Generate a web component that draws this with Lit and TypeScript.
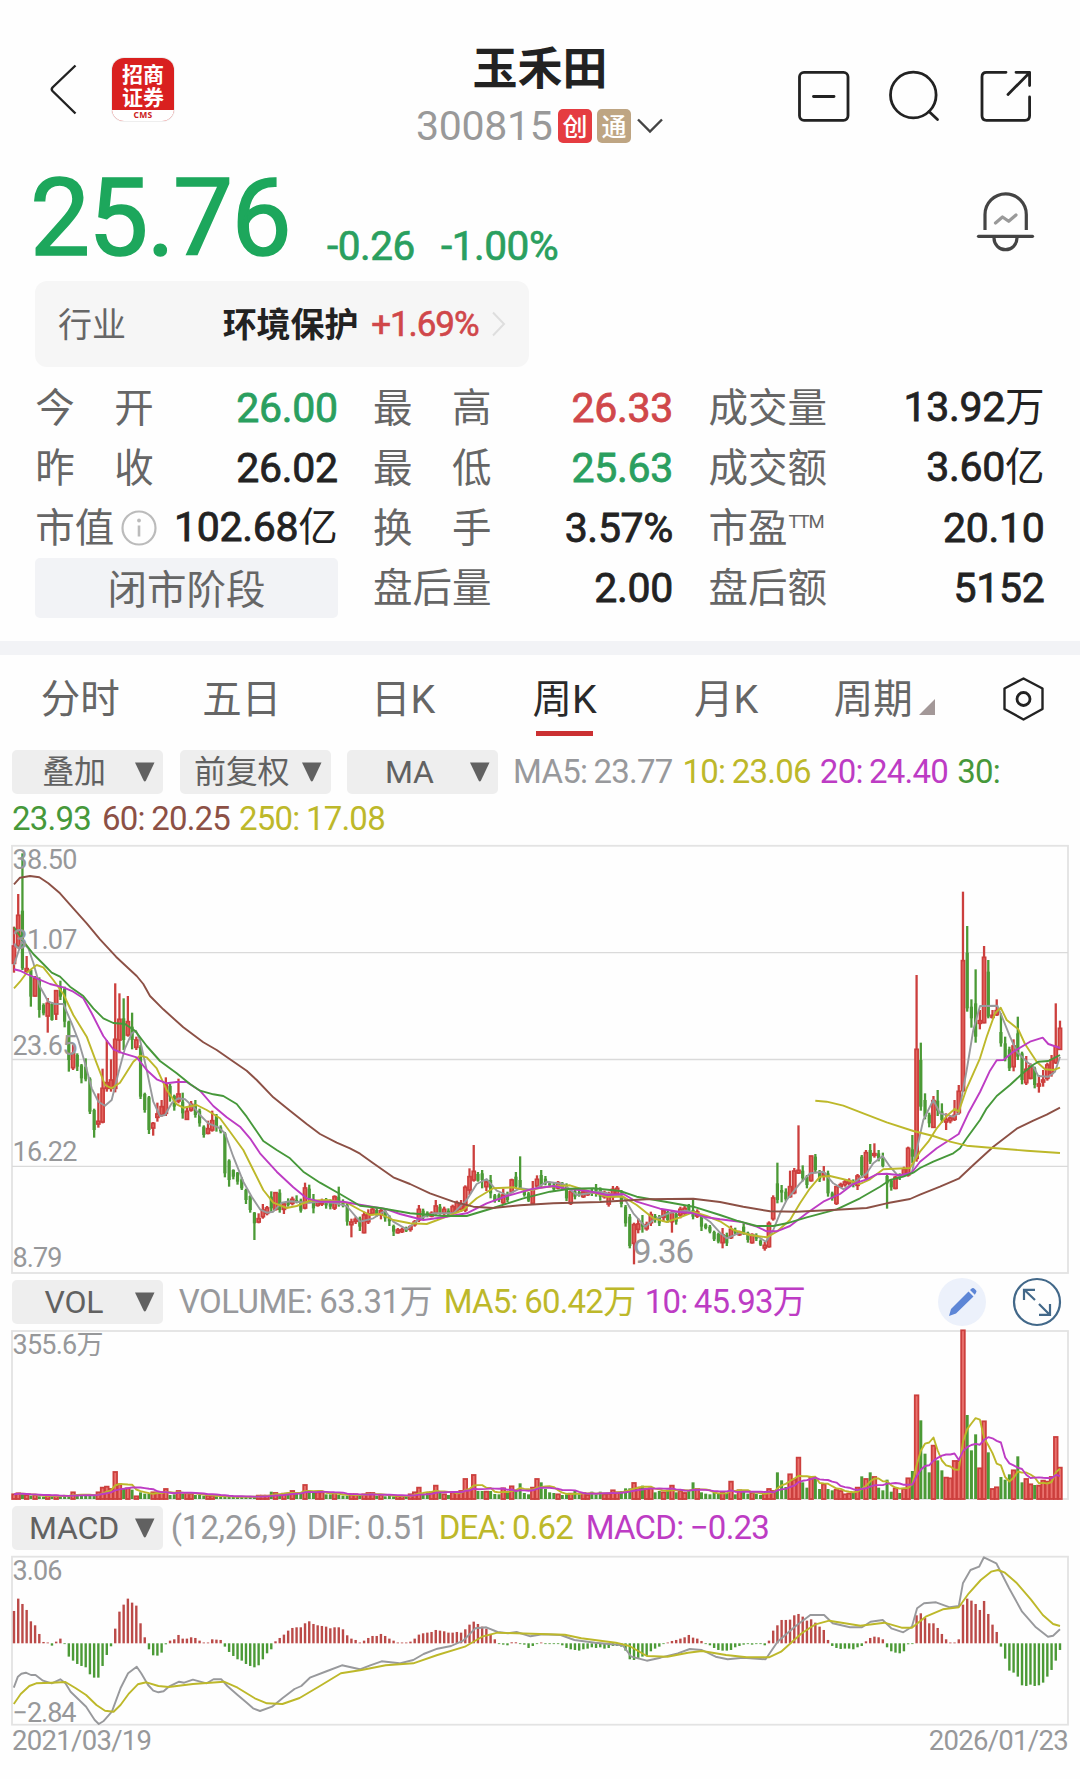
import { LitElement, html, svg, css } from "lit";
import { customElement } from "lit/decorators.js";

// Weekly candles: colour, high, body top, body bottom, low (thirds of a pixel).
const CANDLES = `R 260 318 370 398|R 162 226 318 322|G 40 212 385 390|R 348 386 394 396|G 388 390 470 500|R 408 416 468 470|G 412 420 510 533|G 490 495 520 526|R 474 490 528 578|G 486 492 540 542|R 450 452 522 540|G 422 442 470 480|G 440 446 545 562|G 542 545 660 695|R 615 640 683 690|G 640 645 680 693|G 672 676 715 730|G 655 680 718 724|G 712 716 815 822|G 806 810 870 893|R 760 844 852 863|R 686 745 846 850|R 600 728 745 755|R 658 720 745 755|R 430 598 745 757|R 460 538 600 640|G 475 535 600 630|R 468 545 585 590|G 518 560 600 628|R 590 600 622 630|G 615 620 770 777|G 758 762 810 818|G 768 772 870 882|R 846 850 864 887|R 788 822 832 845|R 780 800 824 830|R 712 735 820 828|G 732 738 770 785|G 764 768 800 812|R 716 762 783 790|G 758 785 820 836|R 800 814 838 840|R 783 793 810 815|G 780 792 825 833|G 806 812 850 860|G 856 860 885 893|R 842 866 880 883|R 812 842 870 875|G 822 828 860 875|G 856 862 874 880|G 876 880 1000 1012|G 958 962 1020 1040|G 988 990 1010 1018|G 996 998 1025 1034|G 1012 1018 1045 1050|G 1046 1050 1080 1092|G 1066 1068 1110 1118|G 1116 1118 1150 1200|R 1120 1136 1146 1150|R 1092 1110 1130 1136|R 1098 1104 1120 1126|G 1054 1070 1105 1118|R 1056 1058 1108 1112|G 1048 1058 1110 1118|R 1086 1092 1108 1122|G 1075 1085 1095 1100|R 1070 1078 1090 1096|G 1066 1080 1085 1090|G 1076 1082 1112 1118|R 1028 1044 1104 1108|G 1034 1046 1075 1090|G 1062 1078 1105 1120|R 1080 1088 1096 1100|R 1076 1084 1092 1098|G 1074 1082 1096 1106|G 1078 1084 1100 1108|R 1066 1070 1104 1110|G 1040 1070 1090 1100|G 1078 1085 1095 1102|G 1088 1096 1145 1157|R 1136 1146 1154 1192|R 1130 1138 1144 1152|G 1130 1135 1160 1173|R 1115 1125 1178 1180|R 1108 1122 1145 1152|R 1100 1108 1120 1126|G 1102 1110 1122 1130|R 1104 1112 1124 1138|G 1108 1114 1135 1145|G 1126 1130 1144 1158|G 1154 1158 1175 1188|R 1164 1170 1178 1181|R 1163 1169 1175 1179|G 1160 1164 1172 1176|R 1156 1160 1168 1175|R 1140 1146 1154 1160|R 1095 1108 1140 1146|G 1106 1112 1132 1140|G 1114 1118 1128 1132|R 1114 1120 1128 1132|R 1080 1098 1118 1124|G 1092 1100 1118 1124|R 1100 1108 1120 1126|G 1105 1112 1124 1128|R 1094 1100 1118 1126|R 1082 1088 1110 1118|R 1080 1092 1108 1116|R 1036 1042 1110 1116|R 985 1010 1050 1065|R 915 994 1020 1025|G 996 1002 1022 1025|G 990 1000 1020 1045|R 1020 1026 1040 1053|G 1005 1020 1060 1075|G 1062 1066 1082 1088|G 1060 1064 1080 1086|R 1046 1065 1088 1095|G 1055 1065 1080 1086|R 1016 1020 1055 1060|G 996 1010 1040 1046|G 949 1020 1045 1050|G 1048 1052 1065 1070|G 1056 1060 1082 1086|R 1023 1050 1090 1095|R 1006 1018 1038 1046|G 990 1005 1035 1042|G 1008 1016 1030 1036|G 1025 1030 1036 1040|G 1028 1034 1048 1054|R 1023 1028 1044 1048|G 1026 1032 1042 1048|G 1030 1040 1075 1083|R 1045 1055 1090 1095|G 1045 1054 1070 1078|G 1050 1056 1065 1070|R 1048 1056 1070 1074|R 1050 1056 1064 1068|G 1045 1052 1062 1068|G 1032 1044 1060 1070|G 1042 1050 1070 1082|R 1052 1058 1070 1076|R 1055 1062 1092 1100|R 1038 1048 1070 1080|R 1038 1045 1062 1070|G 1050 1070 1092 1102|G 1095 1100 1150 1160|G 1122 1130 1218 1225|R 1148 1154 1210 1273|R 1135 1152 1168 1180|G 1125 1150 1160 1178|R 1145 1154 1166 1172|R 1115 1124 1148 1158|G 1122 1128 1140 1148|G 1125 1130 1150 1158|R 1108 1112 1132 1146|G 1110 1116 1140 1148|R 1110 1118 1145 1178|G 1115 1122 1145 1154|R 1100 1108 1125 1135|R 1096 1105 1120 1126|G 1092 1098 1116 1122|G 1078 1110 1130 1138|R 1108 1116 1128 1134|G 1122 1128 1160 1173|G 1150 1154 1164 1168|G 1155 1160 1175 1180|G 1172 1176 1198 1203|G 1178 1182 1205 1210|R 1164 1185 1208 1225|G 1178 1185 1210 1218|R 1157 1168 1193 1197|G 1163 1170 1178 1183|R 1172 1176 1184 1188|G 1150 1160 1178 1185|G 1175 1178 1200 1208|R 1180 1184 1208 1211|G 1180 1186 1196 1203|G 1198 1202 1214 1218|R 1205 1216 1224 1232|R 1144 1150 1220 1223|R 1066 1074 1136 1142|G 968 1030 1080 1090|G 1035 1050 1058 1087|G 1045 1055 1078 1084|R 992 1040 1070 1073|R 984 993 1058 1063|R 856 991 999 1002|G 976 992 1015 1024|G 1005 1010 1035 1045|R 948 948 1022 1025|G 942 950 990 1000|G 990 995 1018 1026|R 978 1000 1006 1022|G 992 1000 1060 1070|G 1055 1060 1075 1082|R 1038 1040 1090 1095|R 1028 1034 1040 1044|R 1020 1026 1034 1040|R 1015 1022 1030 1036|G 1018 1024 1034 1042|R 1002 1008 1036 1050|G 945 950 1005 1014|R 930 938 1012 1018|G 912 930 965 972|R 910 941 946 953|G 930 940 955 964|G 938 955 978 982|G 1000 1008 1030 1106|G 1020 1022 1042 1052|R 1008 1012 1045 1048|G 1000 1004 1014 1020|R 980 988 1005 1010|R 920 925 1005 1010|G 885 928 950 970|R 405 628 955 965|G 608 660 800 812|G 760 780 830 838|G 818 824 850 862|R 768 782 862 864|G 750 782 812 828|G 790 814 840 848|R 820 838 846 870|R 826 834 842 850|R 780 826 838 843|R 735 754 818 824|R 155 362 752 755|G 258 338 505 515|G 478 500 535 563|G 388 490 590 608|R 510 542 550 568|R 318 352 548 550|G 360 395 530 535|R 510 526 532 536|R 478 512 524 528|G 520 576 610 620|G 590 610 655 664|G 620 628 685 693|R 598 618 680 694|G 530 580 650 660|G 635 640 720 733|R 648 688 728 735|R 670 678 715 718|G 680 685 735 745|R 705 732 738 758|R 690 720 726 740|R 668 675 715 722|R 645 660 700 710|R 490 620 668 672|R 542 565 628 630`
  .split("|")
  .map((row) => {
    const [c, ...v] = row.split(" ");
    const [hi, top, bot, lo] = v.map(Number);
    return { up: c === "R", hi, top, bot, lo };
  });

const nums = (s: string) => s.trim().split(/[\s,]+/).map(Number);

const VOLUME = nums(`14,17,17,12,10,12,8,7,11,7,10,8,12,8,20,14,12,10,10,10,20,34,37,30,81,44,30,32,28,8,20,16,16,20,18,20,30,12,14,24,16,18,16,12,12,10,10,10,8,7,7,7,7,7,7,7,7,7,10,10,10,22,18,14,16,20,24,16,18,42,22,18,20,20,14,14,18,12,10,10,14,14,12,14,18,18,10,12,8,9,8,9,9,8,14,20,34,14,18,20,40,20,14,12,20,18,24,60,28,72,24,24,22,24,15,14,32,20,38,28,47,18,14,34,60,50,30,20,18,14,12,14,16,24,14,18,12,22,14,22,14,16,26,20,24,32,32,48,34,40,30,32,20,24,20,28,40,20,24,18,26,50,30,20,16,14,18,16,20,18,52,14,26,24,16,18,16,12,14,30,24,80,56,36,74,58,124,50,34,64,62,30,44,30,26,28,24,14,16,20,34,68,60,80,66,34,26,58,22,32,18,30,62,84,311,236,136,80,160,116,86,64,62,114,114,506,252,146,194,92,233,140,30,35,66,58,74,86,128,50,60,44,42,40,55,52,66,186,94`);

const MACD = nums(`97,134,118,100,66,54,28,4,2,-7,5,14,0,-40,-52,-62,-68,-72,-93,-103,-103,-68,-35,-9,44,95,116,134,122,113,60,18,-18,-36,-37,-28,-3,8,12,25,14,14,18,16,8,1,1,12,11,10,-10,-26,-38,-48,-52,-62,-68,-72,-66,-48,-30,-18,6,16,26,38,46,48,48,60,66,58,54,52,50,45,48,48,42,24,14,10,2,8,16,22,22,28,22,14,8,2,2,2,5,14,26,30,32,34,40,38,36,32,32,34,32,42,56,65,58,50,44,28,12,-2,-4,-6,3,3,-2,-4,-14,-8,-2,2,0,-1,-2,-2,-6,-14,-18,-20,-22,-18,-16,-12,-14,-12,-16,-14,-8,-8,-10,-22,-48,-50,-44,-40,-38,-24,-16,-10,0,2,7,10,14,18,25,17,14,7,-1,-6,-14,-20,-22,-22,-20,-12,-8,-4,-1,-4,-2,-2,-6,8,38,54,70,70,71,84,88,80,68,72,62,50,40,10,-8,-14,-17,-16,-16,-18,-12,-8,6,16,20,18,12,-12,-24,-28,-30,-24,-3,0,84,90,76,60,60,46,28,12,2,2,12,116,134,128,118,100,127,88,56,34,-10,-46,-82,-88,-100,-126,-128,-124,-128,-126,-118,-100,-80,-52,-20`);

const MA60 = `42,133 60,113 90,108 118,112 145,130 180,160 220,205 260,250 300,298 348,350 380,380 410,408 430,432 450,468 490,508 550,562 610,607 650,630 690,658 740,692 770,720 820,772 870,812 920,852 960,882 1010,908 1050,925 1080,941 1120,970 1180,1012 1230,1032 1290,1060 1360,1085 1420,1100 1480,1104 1560,1096 1660,1090 1800,1086 1940,1078 2080,1076 2160,1086 2230,1100 2310,1114 2390,1115 2510,1109 2600,1104 2660,1090 2730,1077 2760,1064 2820,1040 2876,1016 2920,975 2980,920 3050,866 3100,842 3140,824 3180,803`;
const MA30 = `42,262 75,310 100,342 130,372 155,398 180,410 210,440 250,468 280,505 310,535 340,549 375,552 405,572 440,618 480,663 530,700 570,732 600,752 640,763 670,768 710,792 740,830 790,903 830,930 870,955 910,995 960,1028 1020,1062 1080,1097 1140,1104 1230,1120 1330,1128 1400,1128 1480,1104 1570,1075 1650,1055 1710,1046 1780,1045 1860,1053 1910,1070 2000,1086 2080,1100 2160,1125 2210,1142 2270,1158 2320,1158 2360,1150 2420,1132 2510,1108 2580,1075 2640,1040 2670,1020 2710,1010 2740,998 2760,984 2800,965 2860,940 2880,925 2900,895 2940,840 2960,805 2990,768 3030,735 3070,698 3100,674 3115,665 3145,663 3180,645`;
const MA20 = `42,388 60,392 80,402 110,415 150,432 190,442 220,455 250,475 275,520 310,588 340,628 370,640 410,652 440,690 470,718 500,730 530,726 560,726 600,752 640,798 680,832 720,860 750,895 780,940 830,995 880,1042 920,1075 960,1085 1030,1085 1080,1094 1160,1108 1200,1122 1270,1140 1330,1132 1400,1120 1460,1090 1520,1068 1600,1046 1660,1038 1700,1046 1760,1052 1820,1065 1870,1062 1910,1085 1980,1106 2040,1116 2080,1120 2120,1132 2160,1138 2220,1145 2270,1160 2300,1174 2330,1174 2370,1158 2420,1120 2470,1085 2520,1062 2560,1032 2600,1018 2630,1003 2660,1001 2700,1006 2735,998 2760,965 2810,925 2876,882 2905,820 2940,756 2970,692 2990,661 3010,660 3040,635 3090,605 3128,593 3145,612 3180,624`;
const MA10 = `42,445 60,425 80,398 110,375 130,382 160,420 190,462 220,525 260,590 290,670 315,735 335,745 360,728 400,665 420,647 440,652 470,685 500,750 530,793 550,803 590,795 620,810 660,835 690,875 730,930 760,990 790,1050 820,1088 860,1104 890,1098 930,1082 980,1080 1040,1088 1080,1110 1110,1125 1140,1122 1180,1140 1230,1150 1280,1152 1340,1130 1390,1110 1430,1075 1480,1045 1540,1042 1580,1052 1630,1042 1710,1036 1770,1055 1820,1070 1870,1070 1910,1095 1960,1135 2000,1146 2040,1132 2080,1116 2120,1128 2160,1144 2200,1170 2250,1185 2300,1192 2330,1175 2370,1140 2400,1090 2430,1045 2460,1010 2490,1008 2540,1020 2580,1032 2610,1018 2650,988 2730,984 2745,960 2760,935 2785,905 2810,865 2840,828 2865,806 2876,815 2900,745 2940,655 2960,590 2985,520 3002,503 3020,540 3055,568 3075,612 3110,665 3135,688 3160,690 3180,683`;
const MA5 = `42,375 65,305 85,325 100,368 120,440 145,485 165,492 190,492 215,550 235,600 255,670 275,745 295,785 315,797 335,780 355,700 375,625 395,580 408,572 420,600 440,690 460,785 480,828 495,825 515,790 535,775 555,778 580,800 600,825 625,850 655,862 675,880 700,950 730,1025 755,1070 780,1108 800,1118 820,1115 845,1088 870,1084 920,1088 960,1085 1000,1088 1040,1098 1080,1145 1120,1135 1155,1112 1180,1145 1220,1168 1260,1135 1300,1120 1360,1120 1400,1080 1430,1032 1460,1017 1490,1052 1520,1065 1560,1045 1600,1050 1640,1025 1690,1032 1730,1065 1800,1055 1840,1065 1870,1070 1900,1120 1935,1160 1960,1140 2010,1118 2060,1112 2100,1125 2130,1145 2160,1178 2180,1195 2220,1178 2270,1188 2298,1205 2320,1170 2340,1120 2360,1080 2400,1030 2430,1000 2470,995 2500,1030 2530,1048 2560,1030 2600,1000 2620,970 2648,948 2670,980 2695,1008 2735,1000 2750,930 2770,840 2800,780 2820,820 2860,830 2876,820 2900,690 2920,570 2940,498 2992,497 3010,540 3030,590 3050,635 3080,665 3100,680 3115,708 3145,710 3165,695 3180,650`;
const MA250 = `2446,782 2480,785 2530,797 2590,820 2660,847 2740,873 2800,888 2850,905 2900,917 2980,924 3080,932 3180,939`;

const DIF = `40,1253 52,1220 62,1211 75,1208 90,1215 103,1215 125,1232 150,1240 175,1228 190,1240 205,1265 250,1310 275,1350 287,1362 300,1354 325,1325 350,1255 372,1210 397,1190 410,1210 430,1245 445,1262 460,1267 475,1264 490,1250 520,1235 535,1238 560,1229 600,1240 620,1228 643,1228 660,1248 690,1275 715,1297 735,1315 755,1323 790,1310 820,1285 855,1257 875,1248 900,1223 950,1203 993,1186 1045,1198 1075,1186 1108,1174 1160,1180 1200,1170 1230,1152 1270,1136 1310,1128 1345,1112 1380,1075 1412,1072 1445,1086 1475,1090 1500,1086 1540,1099 1575,1093 1628,1095 1668,1110 1728,1118 1808,1126 1833,1160 1878,1172 1918,1163 1968,1150 2003,1137 2038,1140 2078,1160 2113,1168 2158,1163 2223,1168 2258,1115 2308,1070 2353,1035 2393,1035 2418,1060 2468,1072 2503,1072 2528,1055 2563,1050 2588,1075 2623,1087 2648,1070 2663,1015 2683,1000 2718,997 2758,1012 2784,1008 2796,940 2818,900 2843,890 2857,862 2893,880 2930,955 2968,1025 3008,1072 3043,1100 3058,1097 3078,1078`;
const DEA = `40,1302 60,1272 85,1248 105,1240 150,1238 190,1236 220,1255 250,1275 280,1305 305,1322 330,1325 350,1305 375,1270 400,1243 425,1237 460,1248 490,1251 560,1242 650,1235 690,1253 740,1285 775,1300 820,1302 870,1284 930,1247 990,1210 1050,1200 1120,1186 1200,1180 1270,1155 1350,1130 1400,1100 1445,1088 1568,1092 1640,1094 1688,1105 1788,1118 1828,1128 1878,1158 1938,1160 1998,1148 2038,1143 2108,1155 2168,1162 2233,1162 2268,1145 2328,1090 2368,1063 2408,1052 2498,1067 2568,1058 2618,1073 2648,1073 2688,1040 2738,1018 2784,1012 2813,970 2848,930 2878,905 2898,900 2918,908 2953,940 2993,988 3028,1035 3058,1062 3078,1068`;

const RED = "#cc3f3d";
const GREEN = "#4b9a36";
const C = { grey: "#98999c", yellow: "#bdb82a", magenta: "#bd3cc4", green: "#46983a", brown: "#8c5045" };

const cx = (i: number) => 14 + 4.2177 * i;
const scalePts = (s: string, kx: number, ky: number, dy = 0) => {
  const v = nums(s);
  let out = "";
  for (let i = 0; i < v.length; i += 2) out += `${(v[i] / kx).toFixed(1)},${(v[i + 1] / ky + dy).toFixed(1)} `;
  return out;
};
const average = (n: number) =>
  VOLUME.map((_, i) => {
    const part = VOLUME.slice(Math.max(0, i - n + 1), i + 1);
    return part.reduce((a, b) => a + b, 0) / part.length;
  });
const line = (points: string, stroke: string, w = 1.9) =>
  svg`<polyline points=${points} fill="none" stroke=${stroke} stroke-width=${w} stroke-linejoin="round"></polyline>`;
const label = (x: number, y: number, len: number, text: string, size = 27) =>
  svg`<text x=${x} y=${y} font-size=${size} textLength=${len} fill="#97989a">${text}</text>`;

@customElement("price-chart")
class PriceChart extends LitElement {
  static styles = css`
    :host { display: block; height: 440px; }
    svg { display: block; font-family: Roboto, "Noto Sans CJK SC", sans-serif; }
  `;
  render() {
    return html`<svg width="1080" height="440" viewBox="0 0 1080 440">
      <rect x="12" y="5.8" width="1056" height="427.2" fill="none" stroke="#e3e3e3" stroke-width="1.8"></rect>
      ${[112.7, 219.5, 326.3].map((y) => svg`<line x1="12" x2="1068" y1=${y} y2=${y} stroke="#dadada" stroke-width="1.3"></line>`)}
      ${CANDLES.map((k, i) => {
        const x = cx(i);
        const c = k.up ? RED : GREEN;
        const h = Math.max(1.2, (k.bot - k.top) / 3);
        return svg`<line x1=${x} x2=${x} y1=${k.hi / 3} y2=${k.lo / 3} stroke=${c} stroke-width="2.3"></line>
          ${k.up
            ? svg`<rect x=${x - 1.55} y=${k.top / 3} width="3.1" height=${h} fill="#e4645f" stroke=${c} stroke-width="1.7"></rect>`
            : svg`<rect x=${x - 1.6} y=${k.top / 3} width="3.2" height=${h} fill=${c}></rect>`}`;
      })}
      ${line(scalePts(MA5, 3, 3), C.grey)} ${line(scalePts(MA10, 3, 3), C.yellow)}
      ${line(scalePts(MA20, 3, 3), C.magenta)} ${line(scalePts(MA30, 3, 3), C.green)}
      ${line(scalePts(MA60, 3, 3), C.brown)} ${line(scalePts(MA250, 3, 3), C.yellow)}
      ${label(12.5, 29, 65, "38.50")} ${label(12.5, 109, 65, "31.07")} ${label(12.5, 215, 65, "23.65")}
      ${label(12.5, 321, 65, "16.22")} ${label(12.5, 427, 50, "8.79")} ${label(633, 423, 61, "9.36", 33)}
    </svg>`;
  }
}

@customElement("volume-chart")
class VolumeChart extends LitElement {
  static styles = PriceChart.styles;
  render() {
    const avg = (n: number) => average(n).map((v, i) => `${cx(i).toFixed(1)},${(175 - v / 3).toFixed(1)}`).join(" ");
    return html`<svg width="1080" height="182" viewBox="0 0 1080 182">
      <rect x="12" y="7" width="1056" height="168" fill="none" stroke="#e3e3e3" stroke-width="1.8"></rect>
      ${label(12.5, 30, 91, "355.6万")}
      ${VOLUME.map((v, i) => {
        const x = cx(i);
        const h = v / 3;
        return CANDLES[i].up
          ? svg`<rect x=${x - 1.8} y=${175 - h} width="3.6" height=${h} fill="#ea736f" stroke=${RED} stroke-width="1.8"></rect>`
          : svg`<rect x=${x - 1.5} y=${175 - h} width="3" height=${h} fill=${GREEN}></rect>`;
      })}
      ${line(avg(5), C.yellow)} ${line(avg(10), C.magenta)}
    </svg>`;
  }
}

@customElement("macd-chart")
class MacdChart extends LitElement {
  static styles = PriceChart.styles;
  render() {
    return html`<svg width="1080" height="180" viewBox="0 0 1080 180">
      <rect x="12" y="6.7" width="1056" height="168" fill="none" stroke="#e3e3e3" stroke-width="1.8"></rect>
      ${MACD.map((v, i) => {
        const h = Math.max(0.8, Math.abs(v) / 3);
        return svg`<rect x=${cx(i) - 1.2} y=${v > 0 ? 93.3 - h : 93.3} width="2.4" height=${h} fill=${v > 0 ? "#bb4a48" : GREEN}></rect>`;
      })}
      ${line(scalePts(DIF, 2.9037, 3, -280), C.grey)} ${line(scalePts(DEA, 2.9037, 3, -280), C.yellow)}
      ${label(12.5, 30, 50, "3.06")} ${label(12.5, 172, 64, "−2.84")}
    </svg>`;
  }
}

const stat = (name: unknown, value: string, tone = "") =>
  html`<div class="stat"><span class="name">${name}</span><span class="value ${tone}">${value}</span></div>`;
const pair = (a: string, b: string) => html`<span class="pair"><span>${a}</span><span>${b}</span></span>`;
const unit = (n: string, u: string) => html`<span class="value">${n}<span class="unit">${u}</span></span>`;
const picker = (text: string) =>
  html`<div class="picker"><span class="ptext">${text}</span><svg width="20" height="20" viewBox="0 0 20 20"><path d="M0 0.5H19.5L11 18.5Q9.8 20.5 8.6 18.5Z" fill="#616161"></path></svg></div>`;

@customElement("app-root")
class AppRoot extends LitElement {
  static styles = css`
    :host { display: block; width: 1080px; min-height: 1779px; background: #fefefe; color: #222;
      font-family: Roboto, "Noto Sans CJK SC", sans-serif; overflow: hidden; }
    svg { display: block; flex: none; overflow: visible; fill: none; }
    .header { display: grid; grid-template-columns: 415px 250px 1fr; height: 150px; }
    .left { display: flex; gap: 34px; padding: 58px 0 0 48px; }
    .back { margin-top: 4px; }
    .logo { width: 62px; height: 63px; border-radius: 12px; background: #d9201f; overflow: hidden; color: #fff;
      display: flex; flex-direction: column; box-shadow: 0 0 0 1px #eee; }
    .logotext { flex: 1; text-align: center; font: 700 21px/22.5px "Noto Sans CJK SC", sans-serif; padding-top: 4px; }
    .cms { height: 11px; background: #fff; color: #c22; font: 700 8.5px/10px "Open Sans", sans-serif; text-align: center; letter-spacing: .3px; }
    .center { padding-top: 40px; display: flex; flex-direction: column; gap: 14px; }
    .title { font: 700 45px/52px "Noto Sans CJK SC", sans-serif; text-align: center; }
    .code { display: flex; align-items: center; height: 40px; color: #999; font-size: 41px; }
    .code .num { letter-spacing: -.3px; width: 142px; padding-left: 1px; }
    .badge { width: 34px; height: 34px; border-radius: 5px; background: #e53c41; color: #fff;
      font: 500 25px/33px "Noto Sans CJK SC", sans-serif; text-align: center; margin-right: 5px; }
    .tan { background: #bea583; }
    .icons { display: flex; gap: 34px; padding: 68px 0 0 131px; }
    .quote { display: flex; align-items: flex-start; margin-top: 3px; height: 128px; padding: 0 44px 0 30px; color: #1da75c; }
    .price { font-size: 107px; line-height: 130px; letter-spacing: -1.8px; width: 297px; margin-top: 1px; -webkit-text-stroke: 1.6px #1da75c; }
    .chg { font-size: 40.5px; line-height: 40px; letter-spacing: -.45px; color: #2a9f5f; width: 114px; margin-top: 73px; -webkit-text-stroke: .7px #2a9f5f; }
    .bell { margin: 37px 0 0 auto; }
    .industry { display: flex; align-items: center; margin-left: 35px; width: 494px; height: 85.5px; border-radius: 12px;
      background: #f6f6f6; box-sizing: border-box; padding: 0 23px; }
    .ilabel { font-size: 34px; color: #666; width: 165px; }
    .iname { font-size: 34px; font-weight: 700; width: 149px; }
    .ilabel, .iname { position: relative; top: -1px; }
    .ipct { font-size: 35px; color: #d0474a; letter-spacing: -1.1px; width: 121px; white-space: nowrap; padding-top: 2px; -webkit-text-stroke: .6px #d0474a; }
    .stats { position: relative; display: grid; grid-template-columns: 302.5px 300px 336px; grid-auto-rows: 60px;
      column-gap: 35.3px; margin: 11px 0 0 35.3px; }
    .stat { display: flex; align-items: center; justify-content: space-between; line-height: 60px; white-space: nowrap; }
    .name { color: #666; font-size: 39.5px; display: flex; align-items: center; padding-top: 2px; }
    .pair { display: flex; justify-content: space-between; width: 118.5px; }
    .value { font-size: 41px; letter-spacing: -.3px; -webkit-text-stroke: .8px currentColor; }
    .unit { font-size: 39.5px; letter-spacing: 0; -webkit-text-stroke: 0; }
    .up { color: #d0474a; } .down { color: #2a9f5f; }
    .info { margin: -2px 0 0 7px; }
    .ttm { font-size: 18.5px; line-height: 20px; align-self: flex-start; margin: 13px 0 0 1px; letter-spacing: -1px; }
    .phase { background: #f2f3f6; border-radius: 5px; color: #666; font-size: 39.5px; text-align: center; line-height: 65px; height: 60px; }
    .corner { position: absolute; right: -23.5px; bottom: 0; left: auto; }
    .band { height: 14px; margin-top: 23.5px; background: #f2f3f6; }
    .tabs { display: flex; height: 95px; line-height: 90px; font-size: 39.5px; color: #666; }
    .tab { width: 161.5px; text-align: center; position: relative; white-space: nowrap; left: -.5px; }
    .active { color: #2a2a2a; }
    .active::after { content: ""; position: absolute; left: 52px; top: 76px; width: 57px; height: 5px; background: #cb3032; }
    .tab.period { display: flex; justify-content: center; align-items: flex-start; gap: 6px; left: -4px; }
    .period svg { margin-top: 44px; }
    .hex { margin: 21px 0 0 33px; }
    .tools { display: flex; align-items: center; height: 44px; padding-left: 12px; white-space: nowrap; }
    .picker { width: 151px; height: 44px; border-radius: 5px; background: #eeeeee; display: flex; align-items: center;
      margin-right: 16.7px; flex: none; box-sizing: border-box; padding-right: 8.5px; }
    .ptext { flex: 1; text-align: center; font-size: 32px; color: #616161; letter-spacing: -.2px; line-height: 48px; padding-left: 1.5px; }
    .legend { font-size: 33px; letter-spacing: -.78px; line-height: 48px; color: #98999c; word-spacing: -1px; }
    .y { color: #bdb82a; } .m { color: #bd3cc4; } .g { color: #46983a; } .b { color: #8c5045; }
    .w514 { width: 169.5px; margin-left: -2px; } .w137 { width: 137.3px; }
    .second { display: flex; height: 46px; padding-left: 12px; }
    .second .legend { line-height: 50px; }
    volume-chart { height: 182px; } macd-chart { height: 180px; }
    .dates { display: flex; justify-content: space-between; padding: 0 12px; font-size: 27.5px; line-height: 21px; color: #97989a; letter-spacing: -.7px; }
  `;
  render() {
    return html`
      <div class="header">
        <div class="left">
          <svg class="back" width="30" height="56" viewBox="48 62 30 56"><path d="M75.500 65.500L52.500 87.500Q51 89.300 52.500 91L75.500 113.500" stroke="#222" stroke-width="2.4"></path></svg>
          <div class="logo"><div class="logotext">招商<br />证券</div><div class="cms">CMS</div></div>
        </div>
        <div class="center">
          <div class="title">玉禾田</div>
          <div class="code"><span class="num">300815</span><span class="badge">创</span><span class="badge tan">通</span>
            <svg width="28" height="16" viewBox="636 117 28 16"><path d="M638 118.5L650 130.5L662 118.5" stroke="#444" stroke-width="2.4"></path></svg></div>
        </div>
        <div class="icons">
          <svg width="56" height="56" viewBox="796 68 56 56" stroke="#222" stroke-width="2.8" stroke-linecap="round"><rect x="799.5" y="72.3" width="48.5" height="48" rx="4.5"></rect><path d="M813.5 96.5H834"></path></svg>
          <svg width="56" height="56" viewBox="886 68 56 56" stroke="#222" stroke-width="2.8" stroke-linecap="round"><circle cx="913.3" cy="95" r="22.8"></circle><path d="M929 111.5L937.5 119.5"></path></svg>
          <svg width="56" height="56" viewBox="976 68 56 56" stroke="#222" stroke-width="2.8" stroke-linecap="round" stroke-linejoin="round"><path d="M1006 72.3H986.5Q982 72.3 982 76.8V115.8Q982 120.3 986.5 120.3H1025Q1029.6 120.3 1029.6 115.8V97"></path><path d="M1016 72.3H1029.6V85.5M1029 73.2L1008 94.5"></path></svg>
        </div>
      </div>
      <div class="quote">
        <span class="price">25.76</span><span class="chg">-0.26</span><span class="chg">-1.00%</span>
        <svg class="bell" width="62" height="64" viewBox="974 190 62 64" stroke="#444" stroke-width="3.2" stroke-linecap="round"><path d="M985 230V214.5A20.5 20.5 0 0 1 1026.300 214.500V230" stroke-linecap="butt"></path><path d="M978.500 236.300H1032.500"></path><path d="M994 238A11.5 11.700 0 0 0 1017 238"></path><path d="M995.500 223L1002.500 217L1008.700 221.300L1016 215" stroke="#999" stroke-linejoin="round"></path></svg>
      </div>
      <div class="industry">
        <span class="ilabel">行业</span><span class="iname">环境保护</span><span class="ipct">+1.69%</span>
        <svg width="14" height="26" viewBox="0 0 14 26"><path d="M1 1.500L12 13L1 24.500" stroke="#dedede" stroke-width="2"></path></svg>
      </div>
      <div class="stats">
        ${stat(pair("今", "开"), "26.00", "down")} ${stat(pair("最", "高"), "26.33", "up")}
        <div class="stat"><span class="name">成交量</span>${unit("13.92", "万")}</div>
        ${stat(pair("昨", "收"), "26.02")} ${stat(pair("最", "低"), "25.63", "down")}
        <div class="stat"><span class="name">成交额</span>${unit("3.60", "亿")}</div>
        <div class="stat"><span class="name">市值<svg class="info" width="36" height="36" viewBox="0 0 36 36"><circle cx="18" cy="18" r="16.500" stroke="#bbb" stroke-width="2.200"></circle><path d="M18 15.500V26.500" stroke="#bbb" stroke-width="2.600"></path><circle cx="18" cy="10.500" r="1.900" fill="#bbb"></circle></svg></span>${unit("102.68", "亿")}</div>
        ${stat(pair("换", "手"), "3.57%")}
        <div class="stat"><span class="name">市盈<span class="ttm">TTM</span></span><span class="value">20.10</span></div>
        <div class="phase">闭市阶段</div>
        ${stat("盘后量", "2.00")} ${stat("盘后额", "5152")}
        <svg class="corner" width="19" height="19" viewBox="0 0 19 19"><path d="M19 0V19H1Q-0.500 18.500 0.500 17Z" fill="#999"></path></svg>
      </div>
      <div class="band"></div>
      <div class="tabs">
        <div class="tab">分时</div><div class="tab">五日</div><div class="tab">日K</div><div class="tab active">周K</div><div class="tab">月K</div>
        <div class="tab period">周期<svg width="16" height="16" viewBox="0 0 16 16"><path d="M16 0V16H0Z" fill="#a39898"></path></svg></div>
        <svg class="hex" width="44" height="46" viewBox="0 0 44 46" stroke="#222" stroke-width="2.400" stroke-linejoin="round"><path d="M21.500 2.500L40.500 12.500V33L21.500 43.500L2.500 33V12.500Z"></path><circle cx="21.500" cy="23" r="6.500" stroke-width="2.800"></circle></svg>
      </div>
      <div class="tools">
        ${picker("叠加")}${picker("前复权")}${picker("MA")}
        <span class="legend w514">MA5: 23.77</span><span class="legend y w137">10: 23.06</span><span class="legend m w137">20: 24.40</span><span class="legend g">30:</span>
      </div>
      <div class="second"><span class="legend g" style="width:90px">23.93</span><span class="legend b" style="width:137px">60: 20.25</span><span class="legend y">250: 17.08</span></div>
      <price-chart></price-chart>
      <div class="tools">
        ${picker("VOL")}
        <span class="legend" style="width:265px;margin-left:-1px;letter-spacing:-.5px">VOLUME: 63.31万</span><span class="legend y" style="width:201px">MA5: 60.42万</span><span class="legend m" style="width:293.5px">10: 45.93万</span>
        <svg width="48" height="48" viewBox="0 0 48 48"><circle cx="24" cy="24" r="24" fill="#ecf1fb"></circle><path d="M11 38L13 31L30.500 13.500L35.500 18.500L18 35.500ZM32 12L34 10.300Q35.300 9.500 36.500 10.700L38 12.300Q39 13.500 38 14.800L36.800 16.800Z" fill="#5d86d6"></path></svg>
        <svg style="margin-left:27px" width="48" height="48" viewBox="0 0 48 48" stroke="#426889" stroke-width="2.200"><circle cx="24" cy="24" r="23"></circle><path d="M22 22L11.500 12M11 22V11.800H22M26 26L36.500 36.500M37 26V36.800H26"></path></svg>
      </div>
      <volume-chart></volume-chart>
      <div class="tools">
        ${picker("MACD")}
        <span class="legend" style="width:129px;margin-left:-9px;letter-spacing:-.2px">(12,26,9)</span><span class="legend" style="width:140px;margin-left:7px">DIF: 0.51</span><span class="legend y" style="width:147px;margin-left:-8px">DEA: 0.62</span><span class="legend m">MACD: −0.23</span>
      </div>
      <macd-chart></macd-chart>
      <div class="dates"><span>2021/03/19</span><span>2026/01/23</span></div>
    `;
  }
}
